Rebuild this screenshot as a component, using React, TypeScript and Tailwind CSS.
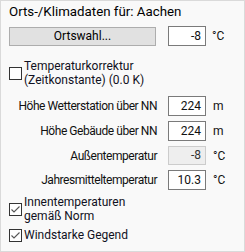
import type { ReactNode } from 'react';

const font = { fontFamily: 'Roboto, "Liberation Sans", sans-serif' };

function Box({ checked }: { checked?: boolean }) {
  return (
    <span className="flex size-[13px] shrink-0 items-center justify-center border border-[#333333] bg-white">
      {checked && (
        <svg width="11" height="11" viewBox="0 0 11 11" aria-hidden="true">
          <path d="M1.5 5.5 L4 8 L9.5 2.5" fill="none" stroke="#555555" strokeWidth="1.1" />
        </svg>
      )}
    </span>
  );
}

function Check({ checked, children }: { checked?: boolean; children: ReactNode }) {
  return (
    <label className="flex items-center gap-[2px] pl-[8px] text-[12px] leading-[14px] text-[#111122]">
      <Box checked={checked} />
      <span className="whitespace-nowrap">{children}</span>
    </label>
  );
}

const rows = [
  { label: 'Höhe Wetterstation über NN', value: '224', unit: 'm' },
  { label: 'Höhe Gebäude über NN', value: '224', unit: 'm' },
  { label: 'Außentemperatur', value: '-8', unit: '°C', disabled: true },
  { label: 'Jahresmitteltemperatur', value: '10.3', unit: '°C' },
];

export default function App() {
  return (
    <div
      className="flex h-[252px] w-[245px] flex-col border border-[#dadada] bg-[#f9f9f9] text-[12px] leading-[14px] text-[#111111]"
      style={font}
    >
      <p className="mt-[2px] whitespace-nowrap pl-[8px] text-[13.3px] leading-[17px] text-black">Orts-/Klimadaten für: Aachen</p>

      <div className="mt-[6px] flex items-center">
        <button
          type="button"
          className="ml-[8px] h-[19px] w-[147px] border border-[#adadad] bg-[#e1e1e1] text-[12px] leading-[17px] text-black"
        >
          Ortswahl...
        </button>
        <div className="ml-[12px] h-[20px] w-[38px] border border-[#7a7a7a] bg-white pr-[4px] text-right leading-[18px]">
          -8
        </div>
        <span className="ml-[6px]">°C</span>
      </div>

      <div className="mt-[13px]">
        <Check>
          Temperaturkorrektur
          <br />
          (Zeitkonstante) (0.0 K)
        </Check>
      </div>

      <div className="mt-[9px] flex flex-col gap-[5px]">
        {rows.map((r) => (
          <div key={r.label} className="flex items-center">
            <span className="w-[156px] whitespace-nowrap text-right tracking-[-0.45px]">{r.label}</span>
            <div
              className={
                r.disabled
                  ? 'ml-[11px] h-[19px] w-[38px] border border-[#cccccc] bg-[#eeeeee] pr-[4px] text-right leading-[17px] text-[#333333]'
                  : 'ml-[11px] h-[20px] w-[38px] border border-[#7a7a7a] bg-white pr-[4px] text-right leading-[18px]'
              }
            >
              {r.value}
            </div>
            <span className="ml-[7px]">{r.unit}</span>
          </div>
        ))}
      </div>

      <div className="mt-[5px]">
        <Check checked>
          Innentemperaturen
          <br />
          gemäß Norm
        </Check>
      </div>
      <div className="mt-[5px]">
        <Check checked>Windstarke Gegend</Check>
      </div>
    </div>
  );
}
